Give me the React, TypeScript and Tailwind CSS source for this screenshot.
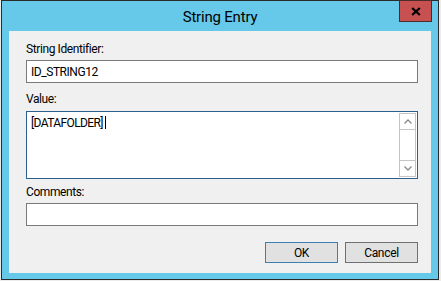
import React from 'react';

const font = { fontFamily: 'Roboto, "Liberation Sans", Arial, sans-serif' };

function Label({ children, className = '' }: { children: React.ReactNode; className?: string }) {
  return (
    <div className={`h-[15px] text-[12px] leading-[15px] tracking-[-0.4px] text-black ${className}`}>
      {children}
    </div>
  );
}

function TextBox({ value, className = '' }: { value?: string; className?: string }) {
  return (
    <div
      className={`flex h-[23px] items-center border border-[#7a7a7a] bg-white pl-[4px] text-[12px] tracking-[-0.45px] text-black ${className}`}
    >
      {value}
    </div>
  );
}

function ScrollBar() {
  return (
    <div className="my-px mr-px flex w-[17px] flex-col border border-[#c4c4c4] bg-white">
      <div className="flex h-[16px] items-center justify-center border-b border-[#c4c4c4]">
        <svg width="8" height="5" viewBox="0 0 8 5">
          <path d="M0.5 4.5 L4 1 L7.5 4.5" fill="none" stroke="#8a8a8a" strokeWidth="1.3" />
        </svg>
      </div>
      <div className="flex-1" />
      <div className="flex h-[16px] items-center justify-center border-t border-[#c4c4c4]">
        <svg width="8" height="5" viewBox="0 0 8 5">
          <path d="M0.5 0.5 L4 4 L7.5 0.5" fill="none" stroke="#8a8a8a" strokeWidth="1.3" />
        </svg>
      </div>
    </div>
  );
}

function Button({ children, primary }: { children: React.ReactNode; primary?: boolean }) {
  return (
    <div
      className={`flex h-[21px] w-[73px] items-center justify-center border bg-[#e1e1e1] text-[12px] tracking-[-0.3px] text-black ${
        primary ? 'border-[#3c7fb1]' : 'border-[#707070]'
      }`}
    >
      {children}
    </div>
  );
}

export default function App() {
  return (
    <div className="flex h-[281px] w-[441px] bg-[#ececec]" style={font}>
      <div className="w-px" />
      <div className="relative flex h-[280px] w-[438px] flex-col border border-[#2b2b2b] bg-[#66c9ea]">
        {/* title bar */}
        <div className="flex h-[30px] items-center justify-center pt-[2px] text-[15px] tracking-[-0.2px] text-black">
          String Entry
        </div>
        <div className="absolute right-[6px] top-[-1px] flex h-[22px] w-[33px] items-center justify-center border border-[#4b2b2b] bg-[#c75050]">
          <svg width="10" height="9" viewBox="0 0 10 9">
            <path d="M1.2 1 L8.8 8 M8.8 1 L1.2 8" stroke="#000" strokeWidth="2.3" />
          </svg>
        </div>

        {/* client */}
        <div className="mx-[7px] flex h-[242px] flex-col bg-[#f0f0f0] pl-[17px] pr-[13px] pt-[11px]">
          <Label>String Identifier:</Label>
          <TextBox value="ID_STRING12" className="mt-[3px]" />

          <Label className="mt-[9px]">Value:</Label>
          <div className="mt-[4px] flex h-[68px] border border-[#2b5f8e] bg-white">
            <div className="flex-1 pl-[4px] pt-[2px] text-[12px] leading-[15px] tracking-[-0.6px] text-black">
              [DATAFOLDER]
              <span className="ml-[2px] inline-block h-[13px] w-px translate-y-[2px] bg-black" />
            </div>
            <ScrollBar />
          </div>

          <Label className="mt-[6px]">Comments:</Label>
          <TextBox className="mt-[3px]" />

          <div className="mt-[16px] flex justify-end gap-[7px]">
            <Button primary>OK</Button>
            <Button>Cancel</Button>
          </div>
        </div>
      </div>
    </div>
  );
}
